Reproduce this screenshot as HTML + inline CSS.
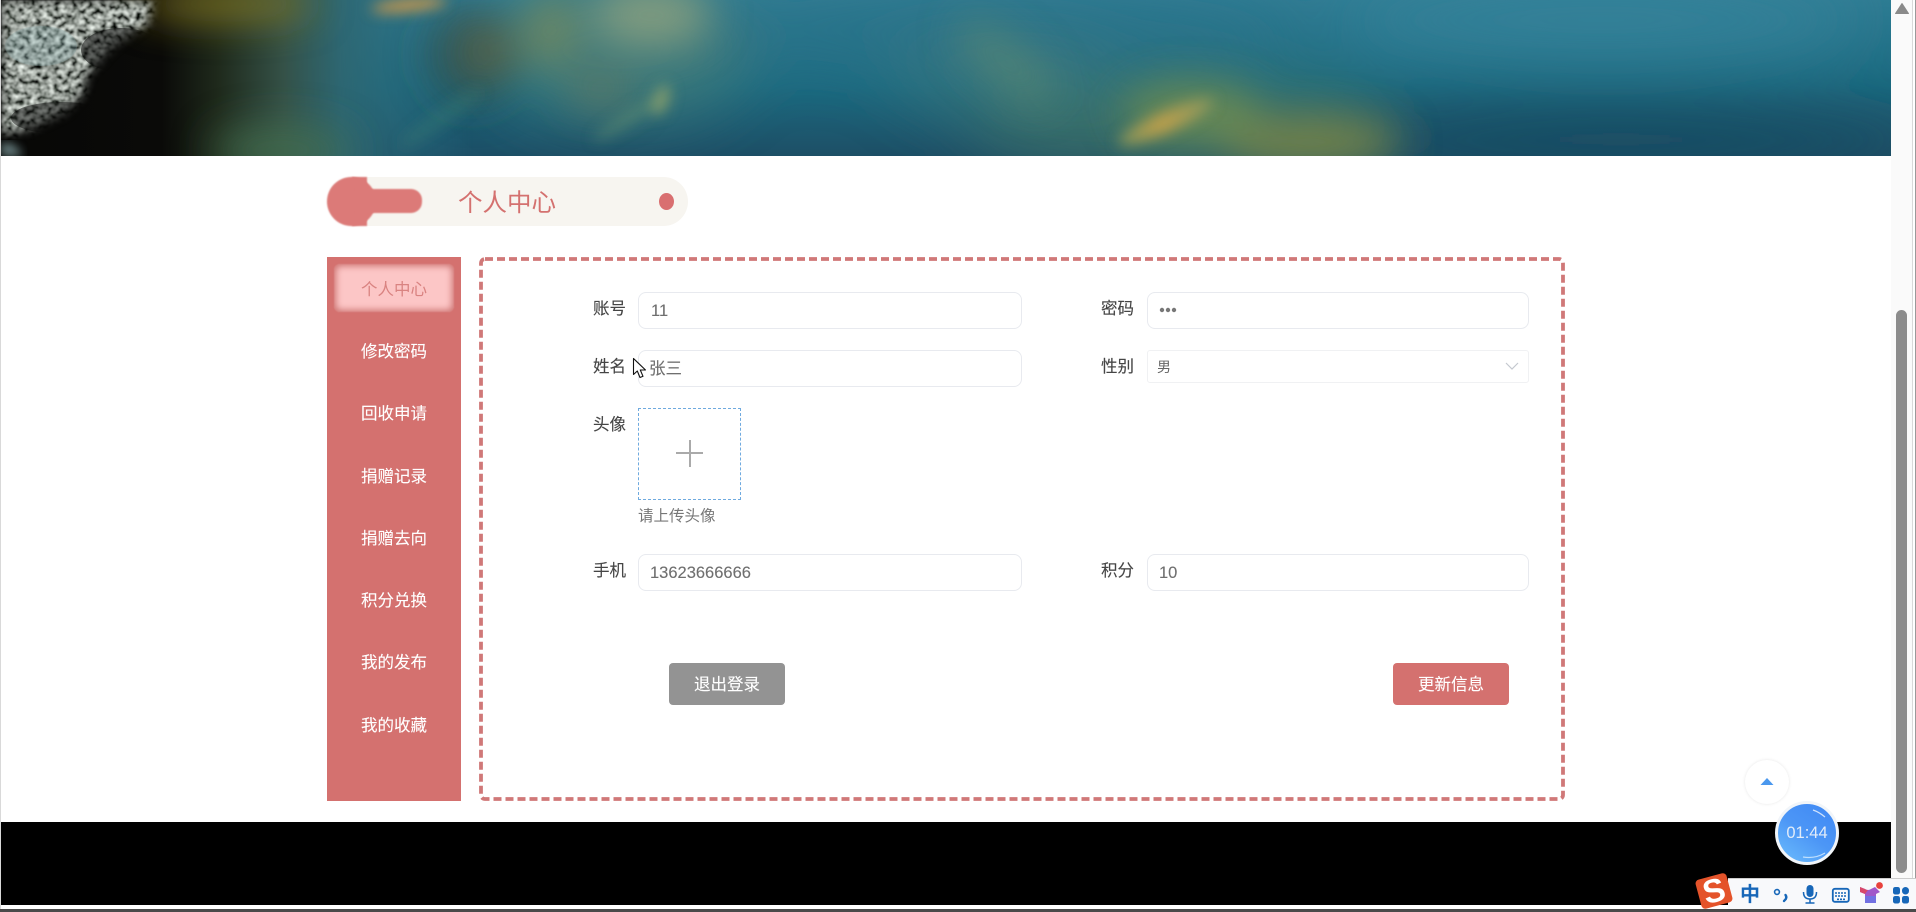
<!DOCTYPE html>
<html lang="zh">
<head>
<meta charset="utf-8">
<title>个人中心</title>
<style>
html,body{margin:0;padding:0;width:1916px;height:912px;overflow:hidden;background:#fff}
body{position:relative;font-family:"Liberation Sans","Noto Sans CJK SC",sans-serif;color:#555}
.a{position:absolute;box-sizing:border-box;white-space:nowrap}
.side{left:327px;width:134px;height:30px;line-height:30px;text-align:center;font-size:16.5px;color:#fff;-webkit-text-stroke:.1px #fff}
.lab{height:26px;line-height:26px;font-size:16.5px;color:#454545;width:40px;-webkit-text-stroke:.12px #454545}
.inp{background:#fff;border:1.5px solid #e8eaef;border-radius:8px;height:37px;line-height:36px;font-size:16.5px;color:#6f6f6f;padding-left:12px;-webkit-text-stroke:.12px #6f6f6f}
.btn{width:116px;height:42px;line-height:44px;text-align:center;color:#fff;font-size:16.5px;border-radius:4px;top:663px;-webkit-text-stroke:.1px #fff}
</style>
</head>
<body>

<!-- banner -->
<svg class="a" style="left:1px;top:0" width="1890" height="156" viewBox="0 0 1890 156">
<defs>
<linearGradient id="base" x1="0" y1="0" x2="0" y2="1">
<stop offset="0" stop-color="#2f7c93"/><stop offset=".55" stop-color="#1c6a80"/><stop offset="1" stop-color="#1d4f66"/>
</linearGradient>
<linearGradient id="left" x1="0" y1="0" x2="1" y2="0">
<stop offset="0" stop-color="#070706"/><stop offset=".085" stop-color="#0a0a08"/><stop offset=".115" stop-color="#1f2a1c"/><stop offset=".15" stop-color="#355248"/><stop offset=".18" stop-color="#2f6670" stop-opacity=".9"/><stop offset=".25" stop-color="#2a6f84" stop-opacity="0"/>
</linearGradient>
<linearGradient id="fish" x1="0" y1="0" x2="1" y2="0">
<stop offset="0" stop-color="#8a9a58"/><stop offset=".45" stop-color="#c9a24a"/><stop offset="1" stop-color="#8c9a60"/>
</linearGradient>
<filter id="b6" x="-60%" y="-100%" width="220%" height="300%"><feGaussianBlur stdDeviation="7"/></filter>
<filter id="b20" x="-60%" y="-80%" width="220%" height="260%"><feGaussianBlur stdDeviation="20"/></filter>
<filter id="b30" x="-60%" y="-100%" width="220%" height="300%"><feGaussianBlur stdDeviation="30"/></filter>
<filter id="b4" x="-20%" y="-20%" width="140%" height="140%"><feGaussianBlur stdDeviation="5"/></filter>
<filter id="coral" x="0" y="0" width="100%" height="100%">
<feTurbulence type="fractalNoise" baseFrequency=".17 .2" numOctaves="2" seed="7"/>
<feColorMatrix type="matrix" values="1.8 0 0 0 -.6  1.9 0 0 0 -.62  1.8 0 0 0 -.6  0 0 0 0 1"/>
<feGaussianBlur stdDeviation=".7"/>
</filter>
<mask id="cm"><path d="M0 0H152L146 24 112 46 86 74 82 92 64 112 30 128 0 134Z" fill="#fff" filter="url(#b4)"/></mask>
</defs>
<rect width="1890" height="156" fill="url(#base)"/>
<g filter="url(#b30)">
<ellipse cx="1600" cy="20" rx="260" ry="40" fill="#36849c" opacity=".7"/>
<ellipse cx="1620" cy="140" rx="320" ry="34" fill="#1c4a60" opacity=".8"/>
<ellipse cx="1180" cy="125" rx="210" ry="50" fill="#4a7a66" opacity=".6"/>
<ellipse cx="620" cy="50" rx="130" ry="70" fill="#4e7f76" opacity=".65"/>
<ellipse cx="1000" cy="70" rx="110" ry="50" fill="#4f7f78" opacity=".4"/>
<ellipse cx="1000" cy="30" rx="300" ry="40" fill="#2e7288" opacity=".5"/>
</g>
<rect width="1890" height="156" fill="url(#left)"/>
<g filter="url(#b20)">
<ellipse cx="225" cy="4" rx="90" ry="14" fill="#8a7d22"/>
<ellipse cx="280" cy="150" rx="70" ry="24" fill="#46704f" opacity=".8"/>
<ellipse cx="470" cy="55" rx="45" ry="50" fill="#3a4536" opacity=".55"/>
<ellipse cx="650" cy="15" rx="60" ry="32" fill="#8ea27e" opacity=".8"/>
<ellipse cx="550" cy="30" rx="26" ry="36" fill="#7e8c5a" opacity=".7"/>
<ellipse cx="490" cy="50" rx="26" ry="26" fill="#706a3d" opacity=".55"/>
<ellipse cx="600" cy="90" rx="34" ry="20" fill="#6b7c5d" opacity=".6"/>
<ellipse cx="1005" cy="62" rx="60" ry="22" fill="#5d8a6f" opacity=".6" transform="rotate(38 1005 62)"/>
<ellipse cx="1310" cy="142" rx="90" ry="26" fill="#7c8644" opacity=".85"/>
<ellipse cx="1190" cy="112" rx="70" ry="30" fill="#6f8d52" opacity=".85"/>
</g>
<g filter="url(#b6)">
<ellipse cx="408" cy="5" rx="38" ry="6" fill="#d69a47" transform="rotate(-6 408 5)"/>
<ellipse cx="628" cy="118" rx="42" ry="6" fill="#6f9a72" opacity=".45" transform="rotate(-32 628 118)"/>
<ellipse cx="660" cy="100" rx="8" ry="16" fill="#90a46c" opacity=".8" transform="rotate(20 660 100)"/>
<ellipse cx="1165" cy="122" rx="52" ry="10" fill="url(#fish)" opacity=".92" transform="rotate(-24 1165 122)"/>
<ellipse cx="440" cy="118" rx="50" ry="7" fill="#3f8174" opacity=".4" transform="rotate(-35 440 118)"/>
</g>
<g mask="url(#cm)">
<rect width="170" height="140" filter="url(#coral)"/>
<ellipse cx="40" cy="46" rx="36" ry="20" fill="#84aaac" opacity=".3"/>
<ellipse cx="120" cy="50" rx="40" ry="22" fill="#0a0a0a" opacity=".55"/>
<ellipse cx="60" cy="118" rx="50" ry="16" fill="#0a0a0a" opacity=".5"/>
</g>
<path d="M0 143Q14 141 22 156H0Z" fill="#7a9698" filter="url(#b4)" opacity=".9"/>
</svg>

<!-- window/scrollbar edges -->
<div class="a" style="left:0;top:0;width:1px;height:912px;background:#d9d9d9"></div>
<div class="a" style="left:1891px;top:0;width:21px;height:912px;background:#fafafa"></div>
<div class="a" style="left:1912px;top:0;width:1px;height:912px;background:#d9d9d9"></div>
<div class="a" style="left:1915px;top:0;width:1px;height:912px;background:#9a9a9a"></div>
<svg class="a" style="left:1894px;top:2px" width="16" height="13"><path d="M8 1.500 14.500 11.500H1.500Z" fill="#8a8a8a" stroke="#8a8a8a" stroke-linejoin="round"/></svg>
<div class="a" style="left:1896px;top:310px;width:11px;height:563px;background:#8c8c8c;border-radius:6px"></div>

<!-- title -->
<div class="a" style="left:327px;top:177px;width:361px;height:49px;background:#f7f5f0;border-radius:25px"></div>
<div class="a" style="left:327px;top:177px;width:49px;height:49px;background:#dc7a78;border-radius:50%;filter:blur(.7px)"></div>
<div class="a" style="left:352px;top:177px;width:15px;height:49px;background:#dc7a78;filter:blur(.7px)"></div>
<div class="a" style="left:355px;top:189px;width:67px;height:24px;background:#dc7a78;border-radius:0 11px 11px 0;filter:blur(.7px)"></div>
<div class="a" style="left:458px;top:187.500px;height:32px;line-height:32px;font-size:24.500px;color:#d4716f">个人中心</div>
<div class="a" style="left:659px;top:193px;width:15px;height:17px;border-radius:50%;background:#d96f70"></div>

<!-- sidebar -->
<div class="a" style="left:327px;top:257px;width:134px;height:544px;background:#d4716f"></div>
<div class="a" style="left:334px;top:264px;width:120px;height:48px;background:#fcc6c6;border-radius:6px;box-shadow:inset 0 0 7px 2px #cc7371;filter:blur(.5px)"></div>
<div class="a side" style="top:274.500px;color:#d98381;-webkit-text-stroke:0">个人中心</div>
<div class="a side" style="top:337px">修改密码</div>
<div class="a side" style="top:399px">回收申请</div>
<div class="a side" style="top:462px">捐赠记录</div>
<div class="a side" style="top:524px">捐赠去向</div>
<div class="a side" style="top:586px">积分兑换</div>
<div class="a side" style="top:648px">我的发布</div>
<div class="a side" style="top:711px">我的收藏</div>

<!-- dashed content box -->
<svg class="a" style="left:479px;top:257px" width="1086" height="544">
<rect x="2" y="2" width="1082" height="540" rx="4" fill="#fff" stroke="#d07878" stroke-width="3.800" stroke-dasharray="8 4"/>
</svg>

<!-- form left -->
<div class="a lab" style="left:593px;top:296px">账号</div>
<div class="a inp" style="left:638px;top:292px;width:384px">11</div>
<div class="a lab" style="left:593px;top:354px">姓名</div>
<div class="a inp" style="left:638px;top:350px;width:384px;padding-left:10px">张三</div>
<div class="a lab" style="left:593px;top:412px">头像</div>
<div class="a" style="left:638px;top:408px;width:103px;height:92px;border:1px dashed #6faadf"></div>
<div class="a" style="left:676px;top:452px;width:27px;height:2px;background:#aaa"></div>
<div class="a" style="left:688.500px;top:440px;width:2px;height:27px;background:#aaa"></div>
<div class="a" style="left:638px;top:505.500px;height:22px;line-height:22px;font-size:15.500px;color:#777">请上传头像</div>
<div class="a lab" style="left:593px;top:558px">手机</div>
<div class="a inp" style="left:638px;top:554px;width:384px;padding-left:11px">13623666666</div>

<!-- form right -->
<div class="a lab" style="left:1101px;top:296px">密码</div>
<div class="a inp" style="left:1147px;top:292px;width:382px">
<svg class="a" style="left:11px;top:14px" width="18" height="6"><circle cx="3" cy="3" r="2.200" fill="#777"/><circle cx="9" cy="3" r="2.200" fill="#777"/><circle cx="15" cy="3" r="2.200" fill="#777"/></svg>
</div>
<div class="a lab" style="left:1101px;top:354px">性别</div>
<div class="a" style="left:1147px;top:350px;width:382px;height:33px;border:1px solid #f0f1f3;border-radius:3px;line-height:32px;font-size:14px;color:#666;padding-left:9px">男
<svg class="a" style="left:357px;top:10px" width="14" height="10"><path d="M1 2 7 8 13 2" fill="none" stroke="#c4c8cf" stroke-width="1.200"/></svg>
</div>
<div class="a lab" style="left:1101px;top:558px">积分</div>
<div class="a inp" style="left:1147px;top:554px;width:382px;padding-left:11px">10</div>

<!-- buttons -->
<div class="a btn" style="left:669px;background:#939393">退出登录</div>
<div class="a btn" style="left:1393px;background:#d4716f">更新信息</div>

<!-- footer -->
<div class="a" style="left:1px;top:822px;width:1890px;height:83px;background:#000"></div>
<div class="a" style="left:0;top:909px;width:1916px;height:3px;background:#4a4a4a"></div>

<!-- back to top -->
<div class="a" style="left:1745px;top:760px;width:44px;height:44px;border-radius:50%;background:#fff;box-shadow:0 0 3px rgba(0,0,0,.1)"></div>
<svg class="a" style="left:1760px;top:777px" width="14" height="9"><path d="M7 1 13.500 8H.5Z" fill="#4a98ee"/></svg>

<!-- timer -->
<div class="a" style="left:1775px;top:801px;width:64px;height:64px;border-radius:50%;border:3px solid #f1f5f9;background:linear-gradient(215deg,#3f88f4 0%,#4c96f6 50%,#6cbdfc 100%);text-align:center;line-height:58px;font-size:16.500px;color:#e2ecf9">01:44</div>
<svg class="a" style="left:1775px;top:801px" width="64" height="64"><path d="M38 9Q44 11 50 16" fill="none" stroke="#fff" stroke-opacity=".75" stroke-width="1.200"/><path d="M28 56Q40 58 50 52" fill="none" stroke="#d8eeff" stroke-opacity=".8" stroke-width="1.200"/></svg>

<!-- IME toolbar -->
<div class="a" style="left:1728px;top:878px;width:188px;height:31px;background:#f8f9fb;border-top:1px solid #ccc"></div>
<div class="a" style="left:1698px;top:876px;width:32px;height:30px;background:#e4532a;border-radius:4px;transform:rotate(-15deg);text-align:center;line-height:30px;font-size:33px;font-weight:700;color:#fff">S</div>
<div class="a" style="left:1739px;top:882px;width:22px;height:26px;line-height:26px;text-align:center;font-size:20px;font-weight:700;color:#1767b8">中</div>
<svg class="a" style="left:1770px;top:880px" width="146" height="28">
<circle cx="7" cy="12" r="2.400" fill="none" stroke="#1767b8" stroke-width="1.600"/>
<path d="M15.500 15q1.500 2 .3 4l-1.800 2" fill="none" stroke="#1767b8" stroke-width="2.400" stroke-linecap="round"/>
<rect x="36.500" y="5" width="7" height="12" rx="3.500" fill="#1767b8"/>
<path d="M33.500 12q0 7 6.500 7t6.500-7M40 19v3.500M35.500 23h9" fill="none" stroke="#1767b8" stroke-width="1.500"/>
<rect x="62.800" y="8.800" width="16" height="13" rx="2" fill="none" stroke="#1767b8" stroke-width="1.800"/>
<path d="M65 13h12M65 16h12M67 19.300h8" stroke="#1767b8" stroke-width="1.600" stroke-dasharray="2 1" fill="none"/>
<path d="M90 7l5 2q3 2 6 0l4-2 5 5-4 2v9H95V14l-5-2Z" fill="#a057c9"/>
<path d="M95 16h11v7H95Z" fill="#6d74e4" opacity=".9"/>
<path d="M90 7l5 2q1 1 3 1l-3 4-5-2Z" fill="#d8486a"/>
<circle cx="109.500" cy="5.500" r="3.400" fill="#e8423c"/>
<rect x="123" y="7" width="7" height="7.500" rx="2.300" fill="#1767b8"/>
<rect x="132" y="7" width="7" height="7.500" rx="3.500" fill="#1767b8"/>
<rect x="123" y="16" width="7" height="7.500" rx="2.300" fill="#1767b8"/>
<rect x="132" y="16" width="7" height="7.500" rx="2.300" fill="#1767b8"/>
</svg>

<!-- mouse cursor -->
<svg class="a" style="left:632px;top:357px" width="16" height="24"><path d="M1.500 1.500V17.500L5.300 14 8 20.500 11 19.300 8.300 13H13.500Z" fill="#fff" stroke="#111" stroke-width="1.100" stroke-linejoin="round"/></svg>

</body>
</html>
